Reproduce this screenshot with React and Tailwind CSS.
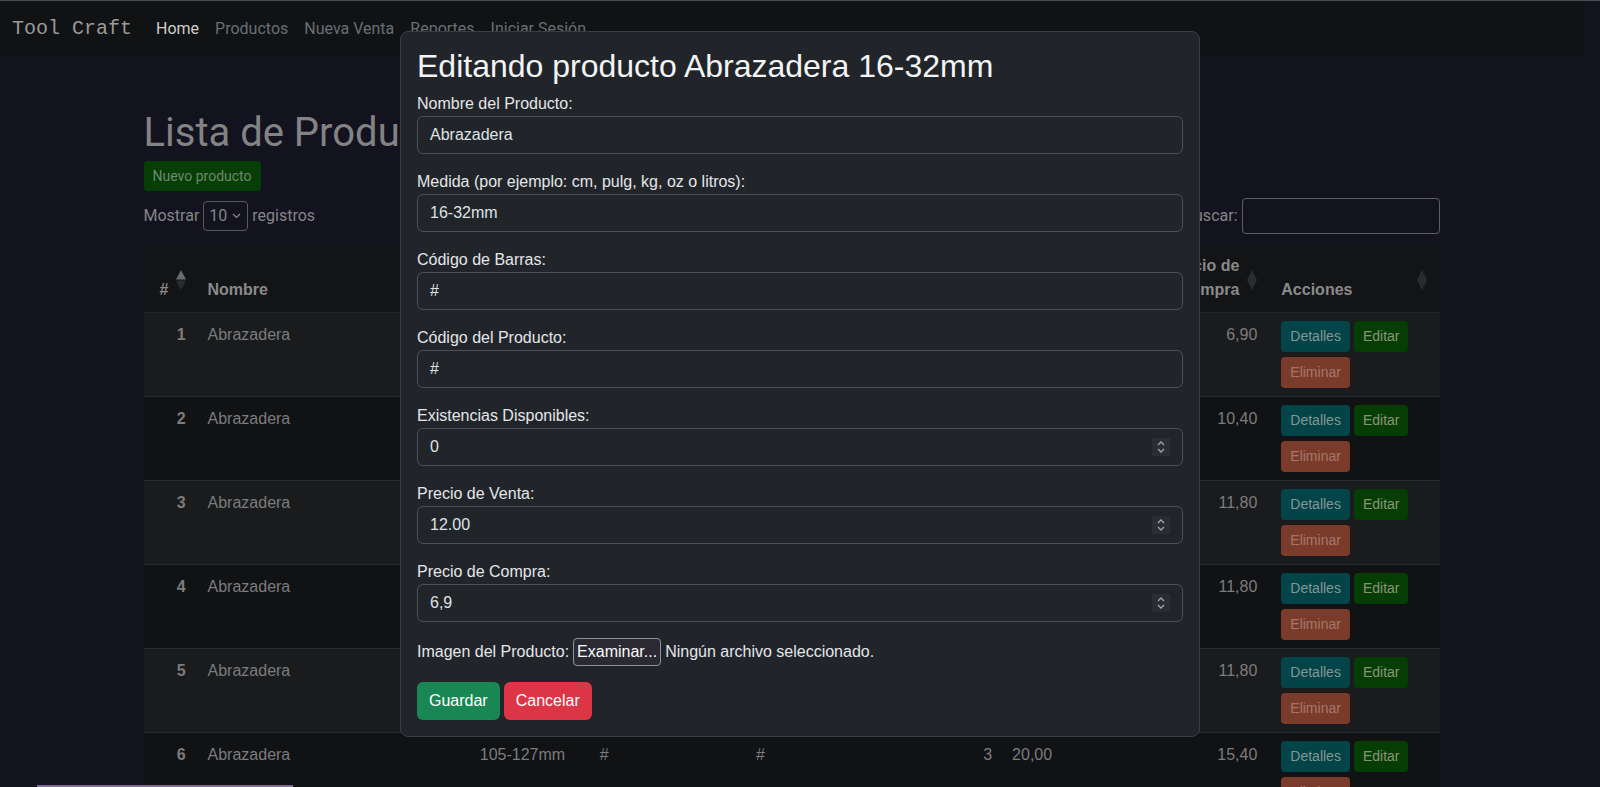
const rows = [
  { n: 1, medida: '16-32mm', exist: 0, venta: '12,00', compra: '6,90' },
  { n: 2, medida: '32-50mm', exist: 4, venta: '15,00', compra: '10,40' },
  { n: 3, medida: '44-64mm', exist: 6, venta: '17,00', compra: '11,80' },
  { n: 4, medida: '57-76mm', exist: 2, venta: '17,00', compra: '11,80' },
  { n: 5, medida: '70-90mm', exist: 5, venta: '17,00', compra: '11,80' },
  { n: 6, medida: '105-127mm', exist: 3, venta: '20,00', compra: '15,40' },
]

const fields = [
  { label: 'Nombre del Producto:', value: 'Abrazadera' },
  { label: 'Medida (por ejemplo: cm, pulg, kg, oz o litros):', value: '16-32mm' },
  { label: 'Código de Barras:', value: '#' },
  { label: 'Código del Producto:', value: '#' },
  { label: 'Existencias Disponibles:', value: '0', number: true },
  { label: 'Precio de Venta:', value: '12.00', number: true },
  { label: 'Precio de Compra:', value: '6,9', number: true },
]

function Diamond() {
  return (
    <svg width="10" height="20" viewBox="0 0 10 20" className="shrink-0">
      <path d="M5 0 L10 10 L5 20 L0 10 Z" fill="#2a2b2e" />
    </svg>
  )
}

function SortUp() {
  return (
    <svg width="10" height="20" viewBox="0 0 10 20" className="shrink-0">
      <path d="M5 0 L10 9.5 L0 9.5 Z" fill="#6a6b6e" />
      <path d="M5 20 L10 10.5 L0 10.5 Z" fill="#2a2b2e" />
    </svg>
  )
}

function Spinner() {
  return (
    <span className="flex h-[18px] w-[18px] flex-col items-center justify-center bg-[#2c2d34]">
      <svg width="10" height="14" viewBox="0 0 10 14">
        <path d="M2 5 L5 2 L8 5" fill="none" stroke="#a2a3ab" strokeWidth="1.3" />
        <path d="M2 9 L5 12 L8 9" fill="none" stroke="#a2a3ab" strokeWidth="1.3" />
      </svg>
    </span>
  )
}

function Th({ children, className = '', icon = <Diamond />, justify = 'justify-between' }) {
  return (
    <th className={`py-[10px] align-bottom font-bold ${className}`}>
      <div className={`flex h-12 items-end gap-2 ${justify}`}>
        {children}
        <span className="flex self-center pt-1">{icon}</span>
      </div>
    </th>
  )
}

export default function App() {
  return (
    <div className="relative h-[787px] w-full overflow-hidden border-t border-[#4b4b4d] bg-[#13121f]">
      <div className="w-[1583px]">
        <nav className="flex h-[55px] items-center bg-[#111214] pl-3 font-[Roboto,sans-serif] text-base">
          <span className="mr-6 font-['Liberation_Mono',monospace] text-[20px] text-[#9a9a9a]">Tool Craft</span>
          <a className="pr-2 text-[#cfcfcf]">Home</a>
          <a className="px-2 text-[#686f74]">Productos</a>
          <a className="px-2 text-[#686f74]">Nueva Venta</a>
          <a className="px-2 text-[#686f74]">Reportes</a>
          <a className="px-2 text-[#686f74]">Iniciar Sesión</a>
        </nav>

        <main className="mx-auto max-w-[1320px] px-3 pt-[53px]">
          <h1 className="mb-1 font-[Roboto,sans-serif] text-[40px] leading-[48px] text-[#838383]">
            Lista de Productos
          </h1>
          <button className="rounded border border-transparent bg-[#063e06] px-2 py-1 font-[Roboto,sans-serif] text-sm leading-5 text-[#6c8a6c]">
            Nuevo producto
          </button>

          <div className="mt-[7px] flex h-9 items-center justify-between font-[Roboto,sans-serif] text-base text-[#858585]">
            <div className="flex items-center gap-1">
              <span>Mostrar</span>
              <span className="flex h-[30px] w-[45px] items-center justify-between rounded border border-[#5a5a5e] pl-[5px] pr-[6px]">
                10
                <svg width="9" height="6" viewBox="0 0 9 6">
                  <path d="M1 1 L4.5 4.5 L8 1" fill="none" stroke="#8a8a8a" strokeWidth="1.2" />
                </svg>
              </span>
              <span>registros</span>
            </div>
            <div className="flex items-center gap-1">
              <span>Buscar:</span>
              <span className="h-9 w-[198px] rounded border border-[#5f5f63]" />
            </div>
          </div>

          <table className="mt-[10px] w-full table-fixed border-collapse font-['Liberation_Sans',Arial,sans-serif] text-base leading-6 text-[#7c7c7c]">
            <colgroup>
              <col className="w-[56px]" />
              <col className="w-[272px]" />
              <col className="w-[120px]" />
              <col className="w-[156px]" />
              <col className="w-[151px]" />
              <col className="w-[105px]" />
              <col className="w-[145px]" />
              <col className="w-[124px]" />
              <col className="w-[166px]" />
            </colgroup>
            <thead>
              <tr className="border-b border-[#232427] bg-[#131416] text-left text-[#8a8a8a]">
                <Th className="pl-[16px] pr-[14px]" icon={<SortUp />} justify="justify-start">#</Th>
                <Th className="px-2">Nombre</Th>
                <Th className="px-2">Medida</Th>
                <Th className="px-2">Código de Barras</Th>
                <Th className="px-2">Código del Producto</Th>
                <Th className="px-2">Existencias</Th>
                <Th className="px-2">Precio de Venta</Th>
                <Th className="pl-2 pr-[16px]" justify="justify-end">
                  <span className="text-right">Precio de<br />Compra</span>
                </Th>
                <Th className="pl-2 pr-[13px]">Acciones</Th>
              </tr>
            </thead>
            <tbody>
              {rows.map((r) => (
                <tr key={r.n} className={`border-b border-[#2a2b2e] ${r.n % 2 ? 'bg-[#1a1b1d]' : 'bg-[#111214]'}`}>
                  <td className="pr-[14px] pt-[10px] text-right align-top font-bold">{r.n}</td>
                  <td className="px-2 pt-[10px] align-top">Abrazadera</td>
                  <td className="px-2 pt-[10px] align-top">{r.medida}</td>
                  <td className="px-2 pt-[10px] align-top">#</td>
                  <td className="px-2 pt-[10px] align-top">#</td>
                  <td className="pr-3 pt-[10px] text-right align-top">{r.exist}</td>
                  <td className="px-2 pt-[10px] align-top">{r.venta}</td>
                  <td className="pr-4 pt-[10px] text-right align-top">{r.compra}</td>
                  <td className="p-2 align-top">
                    <div className="flex flex-wrap gap-x-1 gap-y-[5px] text-sm leading-[21px]">
                      <button className="rounded border border-transparent bg-[#024447] px-2 py-1 text-[#849595]">Detalles</button>
                      <button className="rounded border border-transparent bg-[#053d05] px-2 py-1 text-[#869677]">Editar</button>
                      <button className="rounded border border-transparent bg-[#7a3b2b] px-2 py-1 text-[#a4786a]">Eliminar</button>
                    </div>
                  </td>
                </tr>
              ))}
            </tbody>
          </table>
        </main>
      </div>

      <div className="absolute left-[37px] top-[784px] h-[2px] w-[256px] bg-[#7c6e96]" />

      <div className="absolute left-[400px] top-[30px] w-[800px] rounded-lg border border-[#3a3d42] bg-[#212529] p-4 font-['Liberation_Sans',Arial,sans-serif] text-base text-[#e4e6e9]">
        <h2 className="mb-2 text-[32px] leading-[36px] text-[#f3f4f5]">Editando producto Abrazadera 16-32mm</h2>
        <form>
          {fields.map((f) => (
            <div key={f.label} className="mb-4">
              <label className="block leading-6">{f.label}</label>
              <div className="flex h-[38px] items-center justify-between rounded-md border border-[#4a5057] bg-[#212529] px-3 text-[#dee2e6]">
                <span>{f.value}</span>
                {f.number && <Spinner />}
              </div>
            </div>
          ))}
          <div className="mb-4 flex h-7 items-center">
            <span>Imagen del Producto:</span>
            <span className="ml-1 flex h-7 items-center rounded border border-[#8f8f9d] bg-[#2b2a33] px-[3px] text-[#fbfbfe]">Examinar...</span>
            <span className="ml-1">Ningún archivo seleccionado.</span>
          </div>
          <div className="flex gap-1">
            <button type="button" className="h-[38px] rounded-md bg-[#198754] px-3 text-white">Guardar</button>
            <button type="button" className="h-[38px] rounded-md bg-[#dc3545] px-3 text-white">Cancelar</button>
          </div>
        </form>
      </div>
    </div>
  )
}
